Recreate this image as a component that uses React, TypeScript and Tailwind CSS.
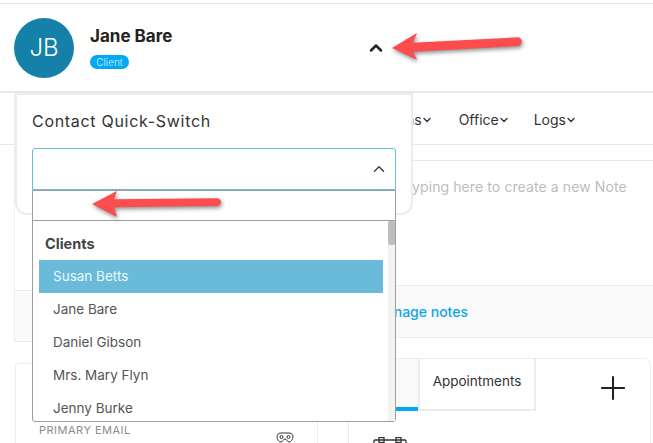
import React from "react";
import { ChevronUp, ChevronDown, Plus } from "lucide-react";

const clients = ["Jane Bare", "Daniel Gibson", "Mrs. Mary Flyn", "Jenny Burke"];

function NavItem({ label, className }: { label: string; className?: string }) {
  return (
    <span className={`flex items-center text-[14px] text-[#333] ${className ?? ""}`}>
      {label}
      <ChevronDown size={12} strokeWidth={2.8} className="-ml-[1px] mt-[2px]" />
    </span>
  );
}

export default function App() {
  return (
    <div className="relative h-[443px] w-[653px] overflow-hidden bg-white font-['Inter',sans-serif]">
      <div className="mt-[3px] flex h-[90px] items-center border-t border-b-2 border-[#e8e8e8] pl-[14px]">
        <div className="flex h-[60px] w-[60px] items-center justify-center rounded-full bg-[#1581a8] text-[24px] font-light text-white">JB</div>
        <div className="ml-[16px] w-[276px]">
          <div className="text-[17px] font-bold leading-[20px] text-[#222]">Jane Bare</div>
          <div className="mt-[9px] flex h-[14px] w-[39px] items-center justify-center rounded-full bg-[#03a9f4] text-[10px] font-light text-[#d8f1fd]">Client</div>
        </div>
        <ChevronUp size={20} strokeWidth={3} className="text-[#222]" />
      </div>

      <div className="flex h-[52px] items-center justify-end gap-[24px] border-b border-[#e8e8e8] pr-[76px] pt-[1px]">
        <NavItem label="Forms" className="mr-[2px]" />
        <NavItem label="Office" />
        <NavItem label="Logs" />
      </div>

      <div className="flex items-start">
        <div className="ml-[14px] flex h-[197px] w-[200px] shrink-0 flex-col justify-end">
          <div className="h-[52px] rounded-bl-[4px] border-y border-l border-[#ececec] bg-[#fafafa]" />
        </div>
        <div className="w-[439px]">
          <div className="mt-[15px] h-[125px] border-t border-[#e8e8e8] pl-[198px] pt-[15px] text-[14px] tracking-[0.1px] text-[#bdbdbd]">
            yping here to create a new Note
          </div>
          <div className="flex h-[53px] items-center justify-end border-y border-[#ececec] bg-[#fafafa] pr-[185px] text-[14px] font-medium text-[#0ea5e9]">
            Manage notes
          </div>
        </div>
      </div>

      <div className="absolute left-[14px] top-[94px] h-[248px] w-[1px] bg-[#efefef]" />

      <div className="absolute left-[15px] top-[363px] h-[90px] w-[303px] rounded-tl-[4px] border-x border-t border-[#ececec]" />

      <div className="absolute left-[348px] top-[358px] h-[95px] w-[303px] rounded-tr-[6px] border-x border-t border-[#ececec]">
        <div className="flex">
          <div className="h-[52px] w-[69px] border-b-[4px] border-[#03a9f4] bg-[#fafafa]" />
          <div className="flex h-[52px] w-[118px] justify-center border-x-2 border-b-2 border-[#ececec] pt-[12px] text-[13.5px] text-[#333]">
            Appointments
          </div>
          <Plus size={38} strokeWidth={1.3} className="ml-[58px] mt-[10px] text-[#222]" />
        </div>
        <svg className="ml-[24px] mt-[26px]" width="36" height="20" viewBox="0 0 36 20" fill="none" stroke="#333" strokeWidth="1.3">
          <rect x="1" y="3" width="32" height="16" rx="1" />
          <rect x="6" y="0.5" width="5" height="5" />
          <rect x="23" y="0.5" width="5" height="5" />
        </svg>
      </div>

      <div className="absolute left-[39px] top-[422px] text-[11px] tracking-[0.5px] text-[#8c8c8c]">PRIMARY EMAIL</div>

      {/* Quick-switch popover */}
      <div className="absolute left-[15px] top-[93px] h-[122px] w-[398px] rounded-b-[12px] border-2 border-[#ececec] bg-white pl-[15px] pt-[15px]">
        <div className="text-[16px] leading-[22px] tracking-[0.7px] text-[#333]">Contact Quick-Switch</div>
        <div className="mt-[16px] flex h-[42px] w-[364px] items-center justify-end rounded-t-[3px] border border-[#6bbbd8] pr-[7px]">
          <ChevronUp size={18} strokeWidth={2} className="text-[#444]" />
        </div>
      </div>

      {/* Dropdown */}
      <div className="absolute left-[32px] top-[190px] h-[232px] w-[364px] rounded-b-[3px] border border-[#9e9e9e] bg-white">
        <div className="h-[30px] border-b border-[#9e9e9e]" />
        <div className="flex h-[200px] overflow-hidden">
          <div className="w-[355px] pl-[6px]">
            <div className="mt-[13px] pl-[6px] text-[14.5px] font-bold leading-[20px] text-[#444]">Clients</div>
            <div className="mt-[6px] flex h-[33px] w-[344px] items-center bg-[#6abbd9] pb-[1px] pl-[14px] text-[13.5px] text-[#eef9fd]">Susan Betts</div>
            {clients.map((c) => (
              <div key={c} className="flex h-[33px] items-center pb-[1px] pl-[14px] text-[13.5px] text-[#555]">{c}</div>
            ))}
          </div>
          <div className="w-[7px] bg-[#f3f3f3]">
            <div className="h-[24px] rounded-[2px] bg-[#bdbdbd]" />
          </div>
        </div>
      </div>

      <div className="absolute left-[317px] top-[422px] h-[21px] w-[1px] bg-[#ececec]" />

      <svg className="absolute left-[276px] top-[432px]" width="18" height="13" viewBox="0 0 18 13" fill="none" stroke="#333" strokeWidth="1">
        <path d="M5 1h8c3 0 4 2 4 4s-2 5-4 5c-2 0-2-3-4-3s-2 3-4 3c-2 0-4-3-4-5s1-4 4-4z" />
        <circle cx="5.5" cy="5" r="1.5" />
        <circle cx="12.5" cy="5" r="1.5" />
      </svg>

      {/* Annotation arrows */}
      <svg className="absolute left-[388px] top-[30px]" width="142" height="36" viewBox="0 0 142 36" style={{ filter: "drop-shadow(1px 2px 2px rgba(0,0,0,.45))" }}>
        <path d="M4 18 L29 3 L25 12.7 L131 7.3 Q137 11.5 131 16 L25 21.7 L29 30 Z" fill="#fb4d4d" />
      </svg>
      <svg className="absolute left-[88px] top-[187px]" width="142" height="36" viewBox="0 0 142 36" style={{ filter: "drop-shadow(1px 2px 2px rgba(0,0,0,.45))" }}>
        <path d="M4 17 L29 4 L26 12.3 L130 11.3 Q136.5 15 130 19 L26 20.3 L29 30 Z" fill="#fb4d4d" />
      </svg>
    </div>
  );
}
